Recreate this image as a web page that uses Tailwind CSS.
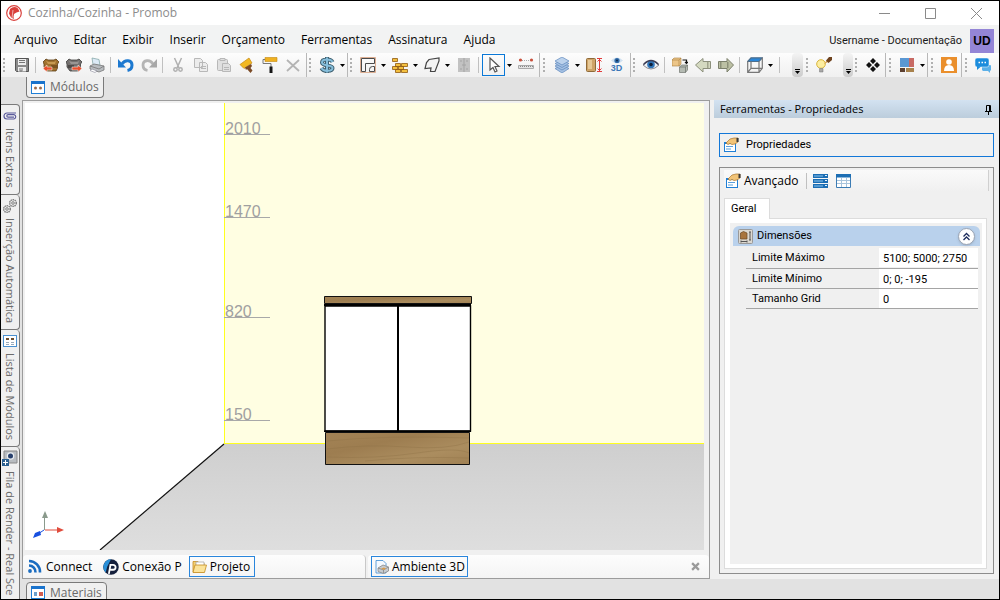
<!DOCTYPE html>
<html lang="pt-BR">
  <head>
    <meta charset="utf-8" />
    <meta name="viewport" content="initial-scale=1, width=device-width" />
    <title>Cozinha/Cozinha - Promob</title>
    <script src="https://cdn.jsdelivr.net/npm/@tailwindcss/browser@4"></script>
  </head>

  <body>
    <!-- shared icons -->
    <svg class="hidden">
      <symbol id="caret" viewBox="0 0 5 3"><path d="M0 0h5L2.500 3z" fill="#000" /></symbol>
      <symbol id="window" viewBox="0 0 14 13">
        <rect x=".5" y=".5" width="13" height="12" fill="#fff" stroke="#1f7fd6" />
        <path d="M0 0h14v3H0z" fill="#1a73cc" />
      </symbol>
      <symbol id="props" viewBox="0 0 16 16">
        <rect x="1.500" y="5.500" width="11" height="9" fill="#fff" stroke="#1f7fd6" />
        <path d="M1 5h12v2H1z" fill="#1f7fd6" />
        <path d="M3 9.500h7M3 12h5" stroke="#5aa0dc" />
        <path d="M3 6l4-4 4-1h4v4l-3 2-3 .5-2-1-2 1z" fill="#f2c478" stroke="#a8742c" stroke-width=".7" />
        <path d="M13.500 1h2v4h-2z" fill="#3b3b3b" />
      </symbol>
    </svg>

    <div
      class="flex h-screen flex-col overflow-hidden border border-black bg-[#e2e2e2] font-['Open_Sans','Noto_Sans',sans-serif] text-xs text-[#1a1a1a]"
    >
      <!-- TITLE BAR -->
      <header class="flex h-6 shrink-0 items-center bg-white pl-[5px] pr-[17px]">
        <svg class="size-4" viewBox="0 0 16 16">
          <circle cx="8" cy="8" r="7.300" fill="#fff" stroke="#d9403c" stroke-width="1.200" />
          <path d="M4 4q4-3.500 8-.5l1.500 3-3 1-2.500 1.500-.5 3L8 14l-3-1.500-2-4z" fill="#d9403c" />
          <path d="M7 5l-1 8" stroke="#fff" stroke-width=".6" />
        </svg>
        <h1 class="ml-[6px] flex-1 text-[#8c8c8c]">Cozinha/Cozinha - Promob</h1>
        <div class="flex gap-[35px] text-[#8a8a8a]">
          <button aria-label="Minimizar">
            <svg class="size-[11px]" viewBox="0 0 11 11"><path d="M0 5.500h11" stroke="currentColor" /></svg>
          </button>
          <button aria-label="Maximizar">
            <svg class="size-[11px]" viewBox="0 0 11 11">
              <path d="M.5.500h10v10H.5z" fill="none" stroke="currentColor" />
            </svg>
          </button>
          <button aria-label="Fechar">
            <svg class="size-[11px]" viewBox="0 0 11 11"><path d="M0 0l11 11M11 0L0 11" stroke="currentColor" /></svg>
          </button>
        </div>
      </header>

      <!-- MENU -->
      <div class="flex h-7 shrink-0 items-end bg-[#f2f3f3] pr-[5px]">
        <nav class="flex h-7 flex-1 items-center gap-4 pt-[2px] pl-[13px] text-black">
          <button>Arquivo</button>
          <button>Editar</button>
          <button>Exibir</button>
          <button>Inserir</button>
          <button>Orçamento</button>
          <button>Ferramentas</button>
          <button>Assinatura</button>
          <button>Ajuda</button>
        </nav>
        <span class="mr-2 font-['Roboto',sans-serif] text-[11px] leading-6">Username - Documentação</span>
        <span
          class="flex size-6 items-center justify-center bg-[#9485d6] font-['Liberation_Sans',sans-serif] font-bold text-black"
          >UD</span
        >
      </div>

      <!-- TOOLBARS -->
      <div
        class="flex h-6 shrink-0 bg-linear-to-b from-[#fdfdfd] to-[#f0f0f0] [&_button]:flex [&_button]:shrink-0 [&_button]:items-center [&_button]:justify-center"
      >
        <div class="flex items-center border-r border-[#b8b8b8] px-[2px]">
          <i class="h-[14px] w-[7px] border-l-2 border-dotted border-[#b0b0b0]"></i>
          <button class="w-[23px]" aria-label="Salvar">
            <svg class="size-4" viewBox="0 0 16 16">
              <path d="M1.500 1.500h13v13h-12l-1-1z" fill="#8a8a8a" stroke="#555" />
              <path d="M4 2h8v6H4zM4 10h8v4.500H4z" fill="#eee" />
              <path d="M5 3.500h6M5 5.500h6M6 11v3h2v-3" stroke="#777" fill="none" />
            </svg>
          </button>
          <i class="mx-[2px] h-4 w-px border-r border-[#c0c0c0]"></i>
          <i class="w-px"></i>
          <button class="w-[23px]" aria-label="Importar">
            <svg class="size-4" viewBox="0 0 16 16">
              <path d="M0 5l3-3 2 1h6l2-1 3 3-1.500 2v4L13 14H4l-3-4V7z" fill="#a0722f" stroke="#5c3c14" stroke-width=".8" />
              <path d="M3 4l3 1h5l2-1-1 3H5z" fill="#c79a52" />
              <path d="M8 8h6v3H8z" fill="#7c5420" />
              <path d="M0 11.500L4 8v2h5v3H4v2z" fill="#e8502e" stroke="#fff" stroke-width=".5" />
            </svg>
          </button>
          <button class="w-[23px]" aria-label="Exportar">
            <svg class="size-4" viewBox="0 0 16 16">
              <path d="M0 5l3-3 2 1h6l2-1 3 3-1.500 2v4L13 14H4l-3-4V7z" fill="#757170" stroke="#3e3c3b" stroke-width=".8" />
              <path d="M3 4l3 1h5l2-1-1 3H5z" fill="#9a9694" />
              <path d="M2 8h6v3H2z" fill="#4e4a48" />
              <path d="M16 11.500L12 8v2H6v3h6v2z" fill="#e8502e" stroke="#fff" stroke-width=".5" />
            </svg>
          </button>
          <button class="w-[23px]" aria-label="Imprimir">
            <svg class="size-4" viewBox="0 0 16 16">
              <path d="M3 1l7 1.500 1 6-7-1z" fill="#dceaf6" stroke="#8aa" stroke-width=".8" />
              <path d="M1 9l4-2 10 2v4l-5 2-9-3z" fill="#b8bcc0" stroke="#777" stroke-width=".8" />
              <path d="M1 9l9 3 5-3" fill="none" stroke="#777" stroke-width=".8" />
              <path d="M3 12l5 2-2 1.500-5-2z" fill="#fff" stroke="#889" stroke-width=".6" />
            </svg>
          </button>
          <i class="mx-[2px] h-4 w-px border-r border-[#c0c0c0]"></i>
          <i class="w-px"></i>
          <button class="w-[23px]" aria-label="Desfazer">
            <svg class="size-4" viewBox="0 0 16 16">
              <path d="M4 7c3-5 10-4 10 1 0 3-2 5-4.500 5.500" fill="none" stroke="#1d79d0" stroke-width="3" />
              <path d="M0 2v8.500h8z" fill="#1d79d0" />
            </svg>
          </button>
          <button class="w-[23px]" aria-label="Refazer">
            <svg class="size-4" viewBox="0 0 16 16">
              <path d="M12 7C9 2 2 3 2 8c0 3 2 5 4.500 5.500" fill="none" stroke="#b4b4b4" stroke-width="2.800" />
              <path d="M16 2v8.500H8z" fill="#a8a8a8" />
            </svg>
          </button>
          <i class="mx-[2px] h-4 w-px border-r border-[#c0c0c0]"></i>
          <i class="w-px"></i>
          <button class="w-[23px]" aria-label="Recortar">
            <svg class="size-4" viewBox="0 0 16 16" fill="none" stroke="#b0b0b0" stroke-width="1.500">
              <path d="M4.500 1l4.500 10M11.500 1L7 11" />
              <circle cx="5.500" cy="12.500" r="1.700" />
              <circle cx="10.500" cy="12.500" r="1.700" />
            </svg>
          </button>
          <button class="w-[23px]" aria-label="Copiar">
            <svg class="size-4" viewBox="0 0 16 16" fill="#ececec" stroke="#b8b8b8">
              <path d="M1.500 1.500h6l2 2v7h-8zM6.500 5.500h6l2 2v7h-8z" />
              <path d="M8 9.500h5M8 11.500h5" />
            </svg>
          </button>
          <button class="w-[23px]" aria-label="Colar">
            <svg class="size-4" viewBox="0 0 16 16" fill="#e0e0e0" stroke="#b8b8b8">
              <rect x="1.500" y="2.500" width="10" height="11" rx="1" />
              <path d="M4 1.500h5v2H4zM6.500 6.500h6l2 2v6h-8z" />
              <path d="M8 10.500h5M8 12.500h5" />
            </svg>
          </button>
          <button class="w-[23px]" aria-label="Pincel">
            <svg class="size-4" viewBox="0 0 16 16">
              <path d="M1 7.500L10 1l3 5-8 5.500z" fill="#f2b822" stroke="#c48a14" stroke-width=".7" />
              <path d="M6 10.500L12 7l1 2-1.500 2 2 2.500-2 2.500L8 12l-1 1z" fill="#7b4a26" />
            </svg>
          </button>
          <button class="w-[23px]" aria-label="Rolo">
            <svg class="size-4" viewBox="0 0 16 16">
              <path d="M3 .5h12v4H3z" fill="#efb121" stroke="#c48a10" stroke-width=".6" />
              <path d="M3 2.500H1v4h8V10" fill="none" stroke="#777" />
              <path d="M7.500 9.500h3V16h-3z" fill="#161616" />
            </svg>
          </button>
          <button class="w-[23px]" aria-label="Excluir">
            <svg class="size-4" viewBox="0 0 16 16"><path d="M2 3l12 11M14 3L2 14" stroke="#b4b4b4" stroke-width="1.800" /></svg>
          </button>
        </div>

        <div class="flex items-center border-r border-[#b8b8b8] pl-[2px]">
          <i class="h-[14px] w-[6px] border-l-2 border-dotted border-[#b0b0b0]"></i>
          <button class="w-[23px]" aria-label="Orçamento">
            <svg class="size-4" viewBox="0 0 16 16" fill="none">
              <path d="M13.500 5C12 1.500 3 1.500 3 5.500S13.500 7.500 13.500 11s-9 4-11 0M8 0v16" stroke="#3f6070" stroke-width="4" />
              <path d="M13.500 5C12 1.500 3 1.500 3 5.500S13.500 7.500 13.500 11s-9 4-11 0M8 .5v15" stroke="#86bedb" stroke-width="2" />
            </svg>
          </button>
          <button class="w-[9px]" aria-label="Mais opções"><svg class="h-[3px] w-[5px]"><use href="#caret" /></svg></button>
        </div>

        <div class="flex items-center border-r border-[#b8b8b8] px-[2px]">
          <i class="h-[14px] w-[6px] border-l-2 border-dotted border-[#b0b0b0]"></i>
          <button class="w-[23px]" aria-label="Paredes">
            <svg class="size-4" viewBox="0 0 16 16" fill="none">
              <path d="M.5 .5h15v15H.5z" stroke="#dcae92" />
              <path d="M1.500 1.500h13v5h-9v8h-4zM9.500 14.500v-2q0-3 3-3h2v5z" stroke="#4a4a4a" />
            </svg>
          </button>
          <button class="w-[9px]" aria-label="Tipos de parede"><svg class="h-[3px] w-[5px]"><use href="#caret" /></svg></button>
          <button class="w-[23px]" aria-label="Alvenaria">
            <svg class="size-4" viewBox="0 0 16 16" fill="#f3bf3e" stroke="#8f5a10" stroke-width=".8">
              <path d="M.5 1.500h5v3h-5zM3.500 6.500h5v3h-5zM9.500 6.500h6v3h-6zM.5 9.500h5v3h-5zM6.500 9.500h5v3h-5zM3.500 12.500h5v3h-5zM9.500 12.500h6v3h-6z" />
            </svg>
          </button>
          <button class="w-[9px]" aria-label="Tipos de alvenaria"><svg class="h-[3px] w-[5px]"><use href="#caret" /></svg></button>
          <button class="w-[23px]" aria-label="Forma">
            <svg class="size-4" viewBox="0 0 16 16">
              <path d="M5 2.500l10-1.500v3l-4 10.500H6.500L7 11 1 11.500 2.500 5.500z" fill="#f4f4f4" stroke="#444" stroke-width="1.200" />
            </svg>
          </button>
          <button class="w-[9px]" aria-label="Tipos de forma"><svg class="h-[3px] w-[5px]"><use href="#caret" /></svg></button>
          <button class="w-[23px]" aria-label="Porta">
            <svg class="size-4" viewBox="0 0 16 16">
              <path d="M2 1h12v14H2z" fill="#c2c2c2" />
              <path d="M8 1v14M4 4h2M10 4h2M4 12h2M10 12h2M6 8h4" stroke="#a4a4a4" />
            </svg>
          </button>
          <i class="mx-[3px] h-4 w-px border-r border-[#c0c0c0]"></i>
          <button class="h-[22px] w-[23px] border border-[#0a78d7]" aria-label="Selecionar">
            <svg class="size-4" viewBox="0 0 16 16">
              <path d="M4 1v12l3-2.500L9 15l2-1-2-4.500h4z" fill="#fff" stroke="#555" stroke-width="1.200" />
            </svg>
          </button>
          <button class="w-[9px]" aria-label="Modos de seleção"><svg class="h-[3px] w-[5px]"><use href="#caret" /></svg></button>
          <button class="w-[23px]" aria-label="Medir">
            <svg class="size-4" viewBox="0 0 16 16">
              <path d="M4 3.500h8" stroke="#aaa" stroke-dasharray="1 1" />
              <circle cx="2.500" cy="3" r="1.600" fill="#c8503c" />
              <circle cx="13.500" cy="3" r="1.600" fill="#c8503c" />
              <path d="M.5 8.500h15v3H.5z" fill="#e4e4e4" stroke="#aaa" />
              <path d="M2 9.500h13" stroke="#888" stroke-dasharray="1 1" />
            </svg>
          </button>
        </div>

        <div class="flex items-center border-r border-[#b8b8b8] pl-[3px] pr-[2px]">
          <i class="h-[14px] w-[7px] border-l-2 border-dotted border-[#b0b0b0]"></i>
          <button class="w-[23px]" aria-label="Camadas">
            <svg class="size-4" viewBox="0 0 16 16" fill="#a4c0e2" stroke="#5f88bd" stroke-width=".7">
              <path d="M8 8l7 3.500L8 16l-7-4.500z" />
              <path d="M8 5.500L15 9l-7 4-7-4z" />
              <path d="M8 3l7 3.500-7 4-7-4z" />
              <path d="M8 0l7 4-7 4-7-4z" fill="#bcd2ec" />
            </svg>
          </button>
          <button class="w-[9px]" aria-label="Lista de camadas"><svg class="h-[3px] w-[5px]"><use href="#caret" /></svg></button>
          <button class="w-[23px]" aria-label="Altura">
            <svg class="size-4" viewBox="0 0 16 16">
              <rect x=".5" y="1.500" width="9" height="13" rx="1" fill="#cfa468" stroke="#8f6a38" />
              <path d="M2 3h4v9H2z" fill="#e6c896" />
              <path d="M13.500 2v12M11 1.500h5M11 14.500h5M11.500 4.500l2-2 2 2M11.500 11.500l2 2 2-2" stroke="#e03c3c" fill="none" />
            </svg>
          </button>
          <button class="w-[23px] flex-col" aria-label="Visão 3D">
            <svg class="h-[7px] w-3" viewBox="0 0 12 7">
              <path d="M0 3.500q6-6 12 0-6 6-12 0z" fill="#cfe0f0" />
              <circle cx="6" cy="3.500" r="2.600" fill="#2f6aa8" />
              <circle cx="6" cy="3.500" r="1" fill="#102a4c" />
            </svg>
            <span class="font-['Liberation_Sans',sans-serif] text-[9px] leading-[9px] font-bold text-[#3b77b8]">3D</span>
          </button>
        </div>

        <div class="flex items-center pl-[2px]">
          <i class="h-[14px] w-[6px] border-l-2 border-dotted border-[#b0b0b0]"></i>
          <button class="w-[23px]" aria-label="Visualizar">
            <svg class="size-4" viewBox="0 0 16 16">
              <path d="M0 8q8-8 16 0-8 8-16 0z" fill="#eef2f6" stroke="#8c8a90" />
              <circle cx="8" cy="7.500" r="3.800" fill="#2f74b8" />
              <circle cx="8" cy="7.500" r="1.800" fill="#0c1e3a" />
              <path d="M.5 7.500q7.500-8 15 0" fill="none" stroke="#3c3c54" stroke-width="1.300" />
            </svg>
          </button>
          <i class="mx-[2px] h-4 w-px border-r border-[#c0c0c0]"></i>
          <i class="w-px"></i>
          <button class="w-[23px]" aria-label="Substituir módulo">
            <svg class="size-4" viewBox="0 0 16 16" stroke-width=".6">
              <path d="M0 3l2-2h7v6L7 9H0z" fill="#ecc588" stroke="#a87c3c" />
              <path d="M0 3h7v6M7 3l2-2" fill="none" stroke="#a87c3c" />
              <path d="M7.500 10l2-2h6v5l-2 2.500h-6z" fill="#b4bab2" stroke="#5f645e" />
              <path d="M7.500 10h6v5.500M13.500 10l2-2" fill="none" stroke="#5f645e" />
              <path d="M10.500 3h4v3M13 5l1.500 1.500L16 5" fill="none" stroke="#111" stroke-width="1.200" />
            </svg>
          </button>
          <button class="w-[23px]" aria-label="Anterior">
            <svg class="size-4" viewBox="0 0 16 16">
              <path d="M.5 8L8 1.500V4.500h7.500v7H8V15z" fill="#d4d9c0" stroke="#8c907c" />
              <path d="M12 5h1.500v6H12z" fill="#a0a48c" />
            </svg>
          </button>
          <button class="w-[23px]" aria-label="Próximo">
            <svg class="size-4" viewBox="0 0 16 16">
              <path d="M15.500 8L9 1.500V4.500H.5v7H9V15z" fill="#bcc0a4" stroke="#7c806c" />
              <path d="M2 5h1.500v6H2zM9 5h1.500v6H9z" fill="#8c9078" />
            </svg>
          </button>
          <i class="mx-[2px] h-4 w-px border-r border-[#c0c0c0]"></i>
          <i class="w-px"></i>
          <button class="w-[23px]" aria-label="Vista superior">
            <svg class="size-4" viewBox="0 0 16 16" fill="none" stroke="#777" stroke-width="1.200">
              <path d="M.7 4.500L4 .8h11.300L12 4.500z" fill="#2a86d8" stroke="#4d6e8c" />
              <path d="M.7 4.500v10.800H12V4.500M12 15.300l3.300-4V.8M4 4.500v6.800h11.300M4 11.300l-3.300 4" />
            </svg>
          </button>
          <button class="w-[9px]" aria-label="Lista de vistas"><svg class="h-[3px] w-[5px]"><use href="#caret" /></svg></button>
          <i class="mx-1 h-4 w-px border-r border-[#c0c0c0]"></i>
        </div>

        <button
          class="ml-2 w-[11px] flex-col gap-px rounded-sm bg-linear-to-b from-[#f4f4f4] to-[#cccccc] pt-3"
          aria-label="Mais botões"
        >
          <i class="h-px w-[5px] bg-black"></i><svg class="h-[3px] w-[5px]"><use href="#caret" /></svg>
        </button>
        <div class="flex items-center pl-[3px]">
          <i class="h-[14px] w-[6px] border-l-2 border-dotted border-[#b0b0b0]"></i>
          <button class="w-[23px]" aria-label="Iluminação">
            <svg class="size-4" viewBox="0 0 16 16">
              <circle cx="5" cy="7" r="4.300" fill="#fdeea0" stroke="#d9b43c" />
              <path d="M3.500 11.500h3.500V15H3.500z" fill="#a8a8a8" stroke="#777" stroke-width=".5" />
              <path d="M8 7l3-4 2 1.500z" fill="#d8a04c" />
              <path d="M10 3.500L13 0h3v3l-3.500 3z" fill="#6e421e" />
            </svg>
          </button>
        </div>
        <button
          class="ml-2 w-[10px] flex-col gap-px rounded-sm bg-linear-to-b from-[#f4f4f4] to-[#cccccc] pt-3"
          aria-label="Mais botões de luz"
        >
          <i class="h-px w-[5px] bg-black"></i><svg class="h-[3px] w-[5px]"><use href="#caret" /></svg>
        </button>

        <div class="flex items-center border-r border-[#b8b8b8] pl-[2px] pr-px">
          <i class="h-[14px] w-[6px] border-l-2 border-dotted border-[#b0b0b0]"></i>
          <button class="w-[23px]" aria-label="Componentes">
            <svg class="size-4" viewBox="0 0 16 16">
              <path d="M8 1l3 3-3 3-3-3zM8 9l3 3-3 3-3-3zM4 5l3 3-3 3-3-3zM12 5l3 3-3 3-3-3z" fill="#111" />
            </svg>
          </button>
        </div>
        <div class="flex items-center border-r border-[#b8b8b8] pl-[3px]">
          <i class="h-[14px] w-[6px] border-l-2 border-dotted border-[#b0b0b0]"></i>
          <button class="w-[23px]" aria-label="Acabamentos">
            <svg class="size-4" viewBox="0 0 16 16">
              <path d="M1 1h9v9H1z" fill="#5a98d4" />
              <path d="M10 1h5v9h-5z" fill="#c86a64" />
              <path d="M1 11h5v4H1z" fill="#5c4030" />
              <path d="M7 11h8v4H7z" fill="#a8824c" />
            </svg>
          </button>
          <button class="w-[9px]" aria-label="Lista de acabamentos"><svg class="h-[3px] w-[5px]"><use href="#caret" /></svg></button>
        </div>
        <div class="flex items-center border-r border-[#b8b8b8] pl-[3px] pr-px">
          <i class="h-[14px] w-[6px] border-l-2 border-dotted border-[#b0b0b0]"></i>
          <button class="w-[23px]" aria-label="Usuário">
            <svg class="size-4" viewBox="0 0 16 16">
              <path d="M0 0h16v16H0z" fill="#ea8f2c" />
              <circle cx="8" cy="5" r="2.800" fill="#fff" />
              <path d="M3 14q0-6 5-6t5 6z" fill="#fff" />
            </svg>
          </button>
        </div>
        <div class="flex items-center pl-[3px]">
          <i class="h-[14px] w-[6px] border-l-2 border-dotted border-[#b0b0b0]"></i>
          <button class="w-[23px]" aria-label="Conversas">
            <svg class="size-4" viewBox="0 0 16 16">
              <path d="M7 8h8q1 0 1 1v4l-1 1v2l-2-2H8l-1-1z" fill="#5cb0e8" />
              <rect x="0" y="1" width="14" height="9" rx="2" fill="#1c8cdc" stroke="#fff" stroke-width=".5" />
              <path d="M2 9v4l4-3.500z" fill="#1c8cdc" />
              <path d="M3.500 5.500h8" stroke="#fff" stroke-width="1.500" stroke-dasharray="1.500 1.500" />
            </svg>
          </button>
        </div>
      </div>

      <main class="flex min-h-0 flex-1">
        <!-- LEFT TABS -->
        <aside class="flex w-[21px] shrink-0 flex-col overflow-hidden pt-[27px] pr-[2px] text-[11px] text-[#6a6a6a]">
          <button
            class="flex shrink-0 flex-col items-center gap-[5px] rounded-r border border-l-0 border-[#7a7a7a] bg-[#f0f0f0] pt-1 pb-[6px]"
          >
            <svg class="size-[14px]" viewBox="0 0 14 14" fill="none" stroke="#5a5a9c" stroke-width="1.200">
              <path d="M13 4H4a3 3 0 0 0 0 6h7a2.200 2.200 0 0 0 0-4.300H5a1.200 1.200 0 0 0 0 2.400h6" />
            </svg>
            <span class="leading-[18px] [writing-mode:vertical-rl]">Itens Extras</span>
          </button>
          <button
            class="flex shrink-0 flex-col items-center gap-[5px] rounded-r border border-t-0 border-l-0 border-[#7a7a7a] bg-[#f0f0f0] pt-1 pb-[6px]"
          >
            <svg class="size-[14px]" viewBox="0 0 14 14" fill="none" stroke="#808080">
              <circle cx="10" cy="4" r="3.300" stroke-width="1.500" stroke-dasharray="1.500 .6" />
              <circle cx="10" cy="4" r="1.300" />
              <circle cx="4" cy="10" r="3.300" stroke-width="1.500" stroke-dasharray="1.500 .6" />
              <circle cx="4" cy="10" r="1.300" />
            </svg>
            <span class="leading-[18px] [writing-mode:vertical-rl]">Inserção Automática</span>
          </button>
          <button
            class="flex shrink-0 flex-col items-center gap-[5px] rounded-r border border-t-0 border-l-0 border-[#7a7a7a] bg-[#f0f0f0] pt-1 pb-[6px]"
          >
            <svg class="size-[14px]" viewBox="0 0 14 14">
              <rect x=".5" y="1.500" width="13" height="11" fill="#fff" stroke="#4a90d0" />
              <path d="M3 4h3v2H3zM8 4h3v2H8z" fill="#6c4c2c" />
              <path d="M3 8.500h3M8 8.500h3M3 10.500h3M8 10.500h3" stroke="#9ab" />
            </svg>
            <span class="leading-[18px] [writing-mode:vertical-rl]">Lista de Módulos</span>
          </button>
          <button
            class="flex flex-1 shrink-0 flex-col items-center gap-[5px] rounded-tr border-r border-[#7a7a7a] bg-[#f0f0f0] pt-[3px]"
          >
            <svg class="size-4" viewBox="0 0 16 16">
              <path d="M2 1h13v12H2z" fill="#b8bcc0" stroke="#888" />
              <circle cx="8.500" cy="6" r="3.800" fill="#e8ecf0" />
              <circle cx="8.500" cy="6" r="2.500" fill="#28406c" />
              <path d="M0 9h7v7H0z" fill="#2c6090" />
              <path d="M3.500 10v5M1 12.500h5" stroke="#fff" />
            </svg>
            <span class="leading-[18px] whitespace-nowrap [writing-mode:vertical-rl]">Fila de Render - Real Sce</span>
          </button>
        </aside>

        <div class="flex min-w-0 flex-1 flex-col">
          <div class="h-[23px] shrink-0 pl-1">
            <button
              class="flex h-[21px] items-center gap-[5px] rounded-b border border-t-0 border-[#7a7a7a] bg-[#f0f0f0] px-1 text-[#6a6a6a]"
            >
              <svg class="h-[13px] w-[14px]" viewBox="0 0 14 13">
                <use href="#window" />
                <circle cx="4.500" cy="7" r="1.500" fill="#9c6c4c" />
                <circle cx="9.500" cy="7" r="1.500" fill="#9c6c4c" />
              </svg>
              Módulos
            </button>
          </div>

          <div class="flex min-h-0 flex-1 bg-[#f0f0f0]">
            <!-- 3D VIEW -->
            <section class="flex min-w-0 flex-1 flex-col border border-[#9c9c9c]">
              <div class="min-h-0 flex-1 pt-[2px] pr-[5px] pb-[5px] pl-[2px]">
                <svg class="size-full bg-white" viewBox="0 0 679 447" preserveAspectRatio="xMinYMin slice">
                  <defs>
                    <linearGradient id="floor" x1="0" y1="0" x2="0" y2="1">
                      <stop offset="0" stop-color="#cfcfcf" />
                      <stop offset="1" stop-color="#dedede" />
                    </linearGradient>
                    <linearGradient id="wood" x1="0" y1="0" x2="1" y2="1">
                      <stop offset="0" stop-color="#a38355" />
                      <stop offset=".35" stop-color="#9d7d50" />
                      <stop offset=".7" stop-color="#ab8d5f" />
                      <stop offset="1" stop-color="#a08154" />
                    </linearGradient>
                  </defs>
                  <path d="M199 0h480v340H199z" fill="#fffee2" />
                  <path d="M199 341h480v106H75z" fill="url(#floor)" />
                  <path d="M199 0h1v340h479v1H199z" fill="#ffff1e" shape-rendering="crispEdges" />
                  <path d="M199 341L75 447" stroke="#111" stroke-width="1.200" />

                  <g fill="#a0a0a0" font-family="Liberation Sans, sans-serif" font-size="16">
                    <text x="200" y="31">2010</text>
                    <text x="200" y="114">1470</text>
                    <text x="200" y="214">820</text>
                    <text x="200" y="317">150</text>
                  </g>
                  <path d="M199 31.500h46M199 114.500h46M199 214.500h46M199 317.500h46" stroke="#a8a8a8" />

                  <!-- base cabinet -->
                  <path d="M299.500 193.500h147v7h-147z" fill="url(#wood)" stroke="#111" />
                  <path d="M299 201h147v2H299z" fill="#000" />
                  <path d="M300 203h145.500v125H300z" fill="#fff" stroke="#000" stroke-width="1.400" />
                  <path d="M373 203v125" stroke="#000" stroke-width="2" />
                  <path d="M300.500 329.500h144v32h-144z" fill="url(#wood)" stroke="#111" />
                  <path d="M299 328.300h147" stroke="#000" stroke-width="1.600" />
                  <path
                    d="M302 338q60-6 142-3M302 346q40-5 80-2t62-5M302 354q50 2 90-4t52 0M340 358q50-5 104-3"
                    fill="none"
                    stroke="#8d7046"
                    stroke-opacity=".35"
                  />

                  <!-- axes -->
                  <path d="M19.500 427v-13" stroke="#8a9a8c" />
                  <path d="M17 415l3-7 3 7z" fill="#8a9a8c" />
                  <path d="M20 427h13" stroke="#e04c3c" />
                  <path d="M32 424l7 3-7 3z" fill="#e04c3c" />
                  <path d="M19 427l-6 4" stroke="#1850e0" />
                  <path d="M15 428l1 4-8 3 2-5z" fill="#1850e0" />
                </svg>
              </div>
              <div class="flex h-[23px] shrink-0 gap-[2px] text-black">
                <div
                  class="flex w-1/2 items-center rounded-t border-r border-[#c8c8c8] bg-linear-to-b from-[#fdfdfd] to-[#f4f4f4] pl-1"
                >
                  <button class="flex items-center gap-1">
                    <svg class="size-[15px]" viewBox="0 0 15 15" fill="none" stroke="#1a6cc0" stroke-width="2.600">
                      <circle cx="3" cy="12" r="1.900" fill="#1a6cc0" stroke="none" />
                      <path d="M2 6.500a6.500 6.500 0 0 1 6.500 7M2 2a11 11 0 0 1 11 11.500" />
                    </svg>
                    Connect
                  </button>
                  <button class="ml-[11px] flex items-center gap-[3px]">
                    <svg class="size-4" viewBox="0 0 15 15">
                      <circle cx="7.500" cy="7.500" r="7.300" fill="#15203c" />
                      <path d="M7.500.2a7.300 7.300 0 0 0-5 12.400L4 7z" fill="#2a90d8" />
                      <path d="M5.500 14l1.500-8.500h2.500a2.300 2.300 0 0 1 0 4.600H7" fill="none" stroke="#fff" stroke-width="1.700" />
                    </svg>
                    Conexão P
                  </button>
                  <button class="ml-[7px] flex h-[21px] items-center gap-[3px] border border-[#2a86dc] px-[2px] pr-1">
                    <svg class="size-[15px]" viewBox="0 0 15 15" stroke="#c48c20" stroke-width=".8">
                      <path d="M1 2.500h5l1 1.500h5v9H1z" fill="#f3cf72" />
                      <path d="M4 3h8v6H4z" fill="#fff" stroke="#aaa" />
                      <path d="M3 6h11.500l-2 7.500H1z" fill="#fbe39a" />
                    </svg>
                    Projeto
                  </button>
                </div>
                <div
                  class="flex flex-1 items-center rounded-t bg-linear-to-b from-[#fdfdfd] to-[#f4f4f4] pr-[9px] pl-[3px]"
                >
                  <button class="flex h-[21px] items-center gap-[3px] border border-[#2a86dc] px-[3px] pr-[2px]">
                    <svg class="size-[14px]" viewBox="0 0 14 14" stroke-width=".8">
                      <path d="M1 .5h7l3 3V13H1z" fill="#f4f9ff" stroke="#3c8cd0" />
                      <path d="M3 8l5-3 5.500 2v4l-5 2.500L3 11.500z" fill="#c8ccd0" stroke="#888" />
                      <path d="M3 8l5.500 2 5-3M8.500 10v3" fill="none" stroke="#888" />
                      <path d="M6 8.500l3-1 2 1-2 1.500z" fill="#d89c4c" />
                    </svg>
                    Ambiente 3D
                  </button>
                  <button class="ml-auto" aria-label="Fechar aba">
                    <svg class="size-[9px]" viewBox="0 0 8 8"><path d="M1 1l6 6M7 1L1 7" stroke="#9a9a9a" stroke-width="2" /></svg>
                  </button>
                </div>
              </div>
            </section>

            <!-- PROPERTIES -->
            <aside class="ml-1 flex w-[285px] shrink-0 flex-col pb-[5px] font-['Roboto',sans-serif] text-[11px] text-black">
              <div class="flex h-[18px] shrink-0 items-center bg-linear-to-b from-[#d3e2f1] to-[#bccddc] pt-px pr-[5px] pl-[6px]">
                <h2 class="flex-1 font-['Open_Sans','Noto_Sans',sans-serif]">Ferramentas - Propriedades</h2>
                <button aria-label="Fixar painel">
                  <svg class="size-[11px]" viewBox="0 0 11 11" fill="none" stroke="#000">
                    <path d="M3.500 7V1.500h4V7M6.500 1.500V7M2 7.500h7M5.500 7v4" />
                  </svg>
                </button>
              </div>
              <div class="flex min-h-0 flex-1 flex-col gap-[10px] pt-[15px] pr-[5px] pl-[5px]">
                <button class="flex h-[24px] shrink-0 items-center gap-[7px] border border-[#1277d8] pl-[3px]">
                  <svg class="size-4"><use href="#props" /></svg>
                  Propriedades
                </button>

                <div class="flex min-h-0 flex-1 flex-col border border-[#8c8c8c] px-1 pt-[2px] pb-1">
                  <div class="flex h-[21px] shrink-0 items-center border-r border-[#d0d0d0] bg-linear-to-b from-[#fafafa] to-[#f0f0f0] pl-px">
                    <button class="flex items-center gap-[3px] font-['Open_Sans','Noto_Sans',sans-serif] text-xs">
                      <svg class="size-4"><use href="#props" /></svg>
                      Avançado
                    </button>
                    <i class="ml-[7px] h-4 w-px bg-[#c0c0c0]"></i>
                    <button class="ml-[6px]" aria-label="Por categoria">
                      <svg class="h-[14px] w-[15px]" viewBox="0 0 15 14">
                        <path d="M0 0h15v4H0zM0 5h15v4H0zM0 10h15v4H0z" fill="#1c6eb4" />
                        <path d="M1 2h9M1 7h9M1 12h9" stroke="#8cc4ec" />
                        <path d="M12 1.500h2M12 6.500h2M12 11.500h2" stroke="#e8f4fc" />
                      </svg>
                    </button>
                    <button class="ml-2" aria-label="Em tabela">
                      <svg class="h-[14px] w-[15px]" viewBox="0 0 15 14">
                        <path d="M.5 .5h14v13H.5z" fill="#fff" stroke="#3c7cb4" />
                        <path d="M0 0h15v3.500H0z" fill="#1c6eb4" />
                        <path d="M5.500 4v9M10.500 4v9M1 6.500h13M1 9.500h13" stroke="#a8c4dc" />
                      </svg>
                    </button>
                  </div>

                  <div class="mt-[7px] flex shrink-0">
                    <button class="relative -mb-px h-[21px] border border-b-0 border-[#dcdcdc] bg-white px-[6px] pr-3">Geral</button>
                  </div>
                  <div class="mr-[2px] min-h-0 flex-1 border border-[#dcdcdc] bg-white p-1 pl-[5px]">
                    <section class="h-full bg-[#f0f0f0] pt-[3px] pr-[2px] pl-[3px]">
                      <div class="flex h-5 items-center gap-1 rounded-t-md bg-[#b9d1ec] px-[5px] pt-px">
                        <svg class="size-[15px]" viewBox="0 0 15 15">
                          <rect x=".5" y=".5" width="14" height="14" rx="1" fill="#dcd8d0" stroke="#999" />
                          <path d="M2.500 4l3-1.500L9 4v6H2.500z" fill="#a8743c" stroke="#6c4820" stroke-width=".7" />
                          <path d="M12 3v8M11 3h2M11 11h2M3 12.500h6M3 11.500v2M9 11.500v2" stroke="#555" />
                        </svg>
                        <h3 class="flex-1">Dimensões</h3>
                        <button
                          class="flex size-[17px] items-center justify-center rounded-full border border-[#9aa4b4] bg-white shadow"
                          aria-label="Recolher"
                        >
                          <svg class="size-[9px]" viewBox="0 0 9 9" fill="none" stroke="#1c2c5c" stroke-width="1.300">
                            <path d="M1.500 4.500l3-3 3 3M1.500 8l3-3 3 3" />
                          </svg>
                        </button>
                      </div>
                      <div class="pt-[2px] pr-[2px] pl-[13px]">
                        <table class="w-full table-fixed">
                          <tbody>
                            <tr class="h-5 border-b border-[#a4a4a4]">
                              <th id="max" class="w-[133px] pt-[2px] pl-[6px] text-left font-normal">Limite Máximo</th>
                              <td><input class="block h-[19px] w-full bg-white pt-[2px] pl-1" aria-labelledby="max" value="5100; 5000; 2750" /></td>
                            </tr>
                            <tr class="h-5 border-b border-[#a4a4a4]">
                              <th id="min" class="pt-[2px] pl-[6px] text-left font-normal">Limite Mínimo</th>
                              <td><input class="block h-[19px] w-full bg-white pt-[2px] pl-1" aria-labelledby="min" value="0; 0; -195" /></td>
                            </tr>
                            <tr class="h-5 border-b border-[#a4a4a4]">
                              <th id="grid" class="pt-[2px] pl-[6px] text-left font-normal">Tamanho Grid</th>
                              <td><input class="block h-[19px] w-full bg-white pt-[2px] pl-1" aria-labelledby="grid" value="0" /></td>
                            </tr>
                          </tbody>
                        </table>
                      </div>
                    </section>
                  </div>
                </div>
              </div>
            </aside>
          </div>

          <div class="h-5 shrink-0 overflow-hidden pt-[3px] pl-1">
            <button
              class="flex h-[21px] items-center gap-[5px] rounded-t border border-[#7a7a7a] bg-[#f0f0f0] px-1 text-[#6a6a6a]"
            >
              <svg class="h-[13px] w-[14px]" viewBox="0 0 14 13">
                <use href="#window" />
                <path d="M3 6h3v4H3z" fill="#6ca0cc" />
                <path d="M8 6h4v4H8z" fill="#d05c50" />
              </svg>
              Materiais
            </button>
          </div>
        </div>
      </main>
    </div>
  </body>
</html>
